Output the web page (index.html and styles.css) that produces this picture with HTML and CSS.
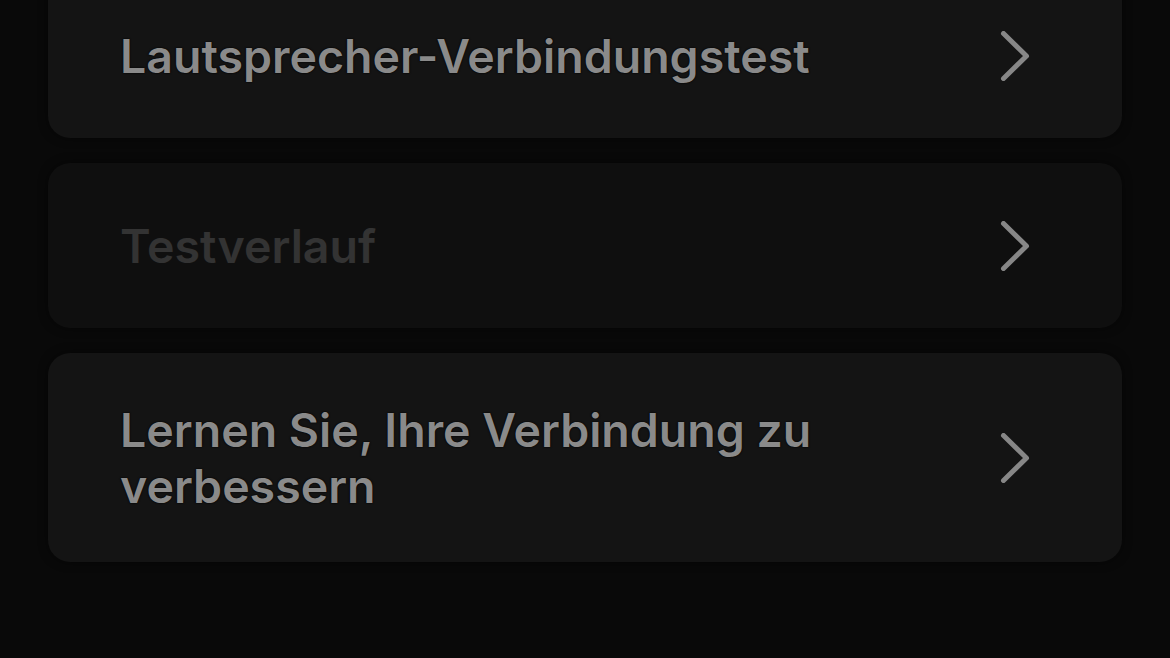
FILE: index.html
```html
<!DOCTYPE html>
<html lang="de">
<head>
<meta charset="utf-8">
<title>Verbindung</title>
<link rel="stylesheet" href="styles.css">
</head>
<body>
<main class="list">
  <a class="card">
    <span class="label">Lautsprecher-Verbindungstest</span>
    <svg class="chevron" viewBox="0 0 32 50" width="32" height="50"><path d="M4.5 2.5 L27.5 25 L4.5 47.5"/></svg>
  </a>
  <a class="card card-disabled">
    <span class="label">Testverlauf</span>
    <svg class="chevron" viewBox="0 0 32 50" width="32" height="50"><path d="M4.5 2.5 L27.5 25 L4.5 47.5"/></svg>
  </a>
  <a class="card">
    <span class="label">Lernen Sie, Ihre Verbindung zu verbessern</span>
    <svg class="chevron" viewBox="0 0 32 50" width="32" height="50"><path d="M4.5 2.5 L27.5 25 L4.5 47.5"/></svg>
  </a>
</main>
</body>
</html>
```
FILE: styles.css
```css
html, body {
  margin: 0;
  padding: 0;
  background: #090909;
  height: 100%;
  overflow: hidden;
}
body {
  font-family: Inter, "Noto Sans", "DejaVu Sans", sans-serif;
}
.list {
  display: flex;
  flex-direction: column;
  gap: 25px;
  padding: 0 48px;
  margin-top: -27px;
}
.card {
  display: flex;
  align-items: center;
  gap: 40px;
  min-height: 165px;
  box-sizing: border-box;
  padding: 48.5px 91px 48.5px 72px;
  background: #141414;
  border-radius: 22px;
  box-shadow: 0 0 10px rgba(0,0,0,0.5);
}
.label {
  flex: 1;
  font-size: 46.5px;
  font-weight: 600;
  line-height: 56px;
  color: #8a8a8a;
  text-shadow: 0 0 2px #000, 0 0 1px #000;
}
.chevron {
  flex: none;
  fill: none;
  stroke: #878787;
  stroke-width: 5;
  stroke-linecap: round;
  stroke-linejoin: round;
}
.card-disabled {
  background: #0f0f0f;
}
.card-disabled .label {
  color: #333333;
  text-shadow: none;
}
```
